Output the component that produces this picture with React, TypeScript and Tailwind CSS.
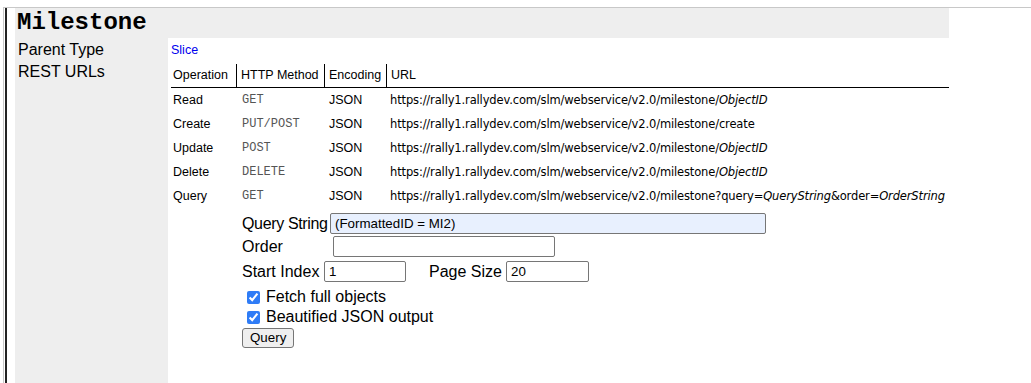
import React from "react";

const rows = [
	{ op: "Read", method: "GET", url: "https://rally1.rallydev.com/slm/webservice/v2.0/milestone/", tail: "id" },
	{ op: "Create", method: "PUT/POST", url: "https://rally1.rallydev.com/slm/webservice/v2.0/milestone/create", tail: "" },
	{ op: "Update", method: "POST", url: "https://rally1.rallydev.com/slm/webservice/v2.0/milestone/", tail: "id" },
	{ op: "Delete", method: "DELETE", url: "https://rally1.rallydev.com/slm/webservice/v2.0/milestone/", tail: "id" },
	{ op: "Query", method: "GET", url: "https://rally1.rallydev.com/slm/webservice/v2.0/milestone?query=", tail: "query" },
];

const cols = "grid grid-cols-[65px_88px_62px_1fr]";

function UrlCell({ url, tail }: { url: string; tail: string }) {
	return (
		<span className="whitespace-nowrap font-['DejaVu_Sans',sans-serif] text-[11.5px] tracking-[-0.14px]">
			{url}
			{tail === "id" && <i>ObjectID</i>}
			{tail === "query" && (
				<>
					<i>QueryString</i>&amp;order=<i>OrderString</i>
				</>
			)}
		</span>
	);
}

export default function App() {
	return (
		<div className="min-h-screen bg-white pt-[7px] font-['Liberation_Sans',Arial,sans-serif] text-black">
			<div className="ml-[3px] border-l border-t border-[#c8c8c8] pl-[1px]">
				<div className="border-l-2 border-[#222] pl-[8px]">
					<div className="w-[934px]">
						<div className="flex h-[30px] items-center bg-[#eeeeee] pl-[2px] font-['Liberation_Mono','Courier_New',monospace] text-[24px] font-bold leading-none">
							Milestone
						</div>
						<div className="grid min-h-[345px] grid-cols-[153px_1fr] grid-rows-[24px_1fr]">
							<div className="bg-[#eeeeee] pl-[3px] pt-[1px] text-[16px] leading-[21px]">Parent Type</div>
							<div className="flex items-center pl-[3px] pt-[1px] text-[12.5px] text-[#0000ee]">Slice</div>
							<div className="bg-[#eeeeee] pl-[3px] text-[16px] leading-[20px]">REST URLs</div>
							<div className="pl-[3px] pt-[1px] text-[12.5px]">
								<div className={`${cols} h-[25px] border-b border-black`}>
									<div className="flex items-center pl-[2px] pt-[1px]">Operation</div>
									<div className="mt-[1px] flex items-center border-l border-black pl-[4px]">HTTP Method</div>
									<div className="mt-[1px] flex items-center border-l border-black pl-[4px]">Encoding</div>
									<div className="mt-[1px] flex items-center border-l border-black pl-[4px]">URL</div>
								</div>
								{rows.map((r) => (
									<div key={r.op} className={`${cols} h-[24px] items-center`}>
										<div className="pl-[2px]">{r.op}</div>
										<div className="pl-[6px] font-['Liberation_Mono','Courier_New',monospace] text-[12px] text-[#555]">{r.method}</div>
										<div className="pl-[5px]">JSON</div>
										<div className="pl-[4px]">
											<UrlCell url={r.url} tail={r.tail} />
										</div>
									</div>
								))}
								<div className="mt-[5px] pl-[71px] text-[16px]">
									<div className="flex h-[21px] items-center">
										<span className="w-[88px] whitespace-nowrap tracking-[-0.35px]">Query String</span>
										<input
											className="h-[21px] w-[436px] rounded-[2px] border border-[#767676] bg-[#e8f0fe] px-[4px] text-[13.33px]"
											defaultValue="(FormattedID = MI2)"
										/>
									</div>
									<div className="mt-[2px] flex h-[21px] items-center">
										<span className="w-[91px]">Order</span>
										<input className="h-[21px] w-[222px] rounded-[2px] border border-[#767676] bg-white px-[4px] text-[13.33px]" />
									</div>
									<div className="mt-[4px] flex h-[21px] items-center">
										<span className="w-[82px] whitespace-nowrap">Start Index</span>
										<input
											className="h-[21px] w-[82px] rounded-[2px] border border-[#767676] bg-white px-[4px] text-[13.33px]"
											defaultValue="1"
										/>
										<span className="ml-[23px] w-[77px] whitespace-nowrap">Page Size</span>
										<input
											className="h-[21px] w-[83px] rounded-[2px] border border-[#767676] bg-white px-[4px] text-[13.33px]"
											defaultValue="20"
										/>
									</div>
									<label className="mt-[5px] flex h-[20px] items-center">
										<input type="checkbox" defaultChecked className="ml-[5px] mr-[6px] h-[13px] w-[13px] accent-[#2f7cf6]" />
										Fetch full objects
									</label>
									<label className="flex h-[20px] items-center">
										<input type="checkbox" defaultChecked className="ml-[5px] mr-[6px] h-[13px] w-[13px] accent-[#2f7cf6]" />
										Beautified JSON output
									</label>
									<button className="mt-[1px] block h-[20px] rounded-[3px] border border-[#767676] bg-[#efefef] px-[7px] text-[13.33px] leading-none">
										Query
									</button>
								</div>
							</div>
						</div>
					</div>
				</div>
			</div>
		</div>
	);
}
